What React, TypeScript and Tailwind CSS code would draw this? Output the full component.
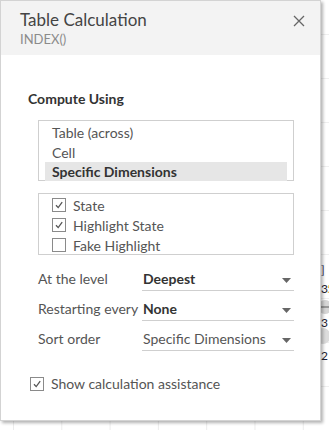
import React from 'react';

const font = { fontFamily: 'Lato, "Open Sans", sans-serif' };

const Check = ({ checked }: { checked: boolean }) => (
  <span className="flex h-[14px] w-[14px] shrink-0 items-center justify-center border border-[#8a8a8a] bg-white">
    {checked && (
      <svg width="10" height="10" viewBox="0 0 10 10">
        <path d="M2 5.2 L4.2 7.6 L8.2 2.2" fill="none" stroke="#555" strokeWidth="1.3" />
      </svg>
    )}
  </span>
);

const Arrow = () => (
  <svg width="9" height="5" viewBox="0 0 9 5" className="mb-[5px] shrink-0">
    <path d="M0 0 H9 L4.5 5 Z" fill="#666" />
  </svg>
);

interface RowProps {
  label: string;
  value: string;
  bold?: boolean;
}

const SelectRow: React.FC<RowProps> = ({ label, value, bold }) => (
  <div className="flex h-[30px] items-stretch">
    <div className="flex w-[104px] items-end whitespace-nowrap pb-[3px] text-[14px] leading-[18px] text-[#555]">{label}</div>
    <div className="flex flex-1 items-end justify-between border-b border-[#cfcfcf] pb-[2px] pl-[1px] pr-[3px]">
      <span className={`text-[14px] leading-[18px] ${bold ? 'font-bold text-[#333]' : 'text-[#555]'}`}>{value}</span>
      <Arrow />
    </div>
  </div>
);

export default function App() {
  return (
    <div
      className="relative h-[430px] w-[329px] overflow-hidden bg-white bg-[linear-gradient(to_right,#ececec_1px,transparent_1px),linear-gradient(to_bottom,#efefef_1px,transparent_1px)] bg-[size:48.3px_44px] bg-[position:13px_34px]"
      style={font}
    >
      {/* chart fragments peeking from behind the dialog */}
      <div className="absolute left-[321px] top-[264px] text-[12px] leading-none text-[#335]">]</div>
      <div className="absolute left-[321px] top-[283px] text-[12px] leading-none text-[#223]">3</div>
      <div className="absolute left-[327px] top-[283px] text-[12px] leading-none text-[#e8a33a]">5</div>
      <div className="absolute left-[318px] top-[300px] h-[14px] w-[14px] rounded-full bg-[#d6d6d6]" />
      <div className="absolute left-[318px] top-[306px] h-[2px] w-[11px] bg-[#999]" />
      <div className="absolute left-[321px] top-[317px] text-[12px] leading-none text-[#223]">3</div>
      <div className="absolute left-[316px] top-[328px] h-[16px] w-[14px] rounded-full bg-[#dcdcdc]" />
      <div className="absolute left-[321px] top-[350px] text-[12px] leading-none text-[#223]">2</div>

      {/* dialog */}
      <div className="relative z-10 flex h-[421px] w-[321px] flex-col border border-[#d3d3d3] bg-white shadow-[2px_2px_3px_rgba(0,0,0,0.3)]">
        <div className="flex h-[54px] shrink-0 items-start justify-between bg-[#f3f3f3] pl-[19px] pr-[15px] pt-[8px]">
          <div className="flex flex-col">
            <span className="text-[17px] leading-[22px] text-[#444]">Table Calculation</span>
            <span className="text-[13px] leading-[16px] text-[#8b8b8b]">INDEX()</span>
          </div>
          <svg width="12" height="12" viewBox="0 0 12 12" className="mt-[6px]">
            <path d="M1 1 L11 11 M11 1 L1 11" stroke="#666" strokeWidth="1.3" />
          </svg>
        </div>

        <div className="flex flex-col px-[27px] pt-[35px]">
          <div className="text-[14px] font-bold leading-[18px] text-[#333]">Compute Using</div>

          <div className="ml-[10px] mt-[12px] flex h-[61px] w-[256px] flex-col border border-[#cfcfcf] px-[6px] pt-[1px] text-[14px] text-[#555]">
            <div className="flex h-[20px] items-center pl-[7px]">Table (across)</div>
            <div className="flex h-[20px] items-center pl-[7px]">Cell</div>
            <div className="flex h-[19px] items-center bg-[#e6e6e6] pl-[7px] font-bold text-[#333]">Specific Dimensions</div>
          </div>

          <div className="ml-[10px] mt-[12px] flex h-[62px] w-[256px] flex-col border border-[#cfcfcf] pl-[13px] pt-[1px] text-[14px] text-[#555]">
            <div className="flex h-[20px] items-center gap-[7px]"><Check checked />State</div>
            <div className="flex h-[20px] items-center gap-[7px]"><Check checked />Highlight State</div>
            <div className="flex h-[20px] items-center gap-[7px]"><Check checked={false} />Fake Highlight</div>
          </div>

          <div className="ml-[10px] mt-[6px] flex w-[256px] flex-col">
            <SelectRow label="At the level" value="Deepest" bold />
            <SelectRow label="Restarting every" value="None" bold />
            <SelectRow label="Sort order" value="Specific Dimensions" />
          </div>

          <div className="ml-[2px] mt-[22px] flex items-center gap-[7px] text-[14px] text-[#555]">
            <Check checked />
            Show calculation assistance
          </div>
        </div>
      </div>
    </div>
  );
}
